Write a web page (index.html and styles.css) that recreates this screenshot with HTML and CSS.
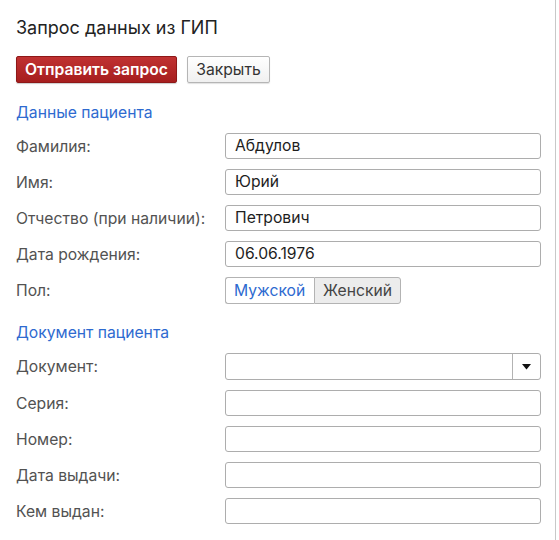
FILE: index.html
```html
<!DOCTYPE html>
<html lang="ru">
<head>
<meta charset="utf-8">
<title>Запрос данных из ГИП</title>
<link rel="stylesheet" href="styles.css">
</head>
<body>
<div class="panel">
  <h1 class="title">Запрос данных из ГИП</h1>
  <div class="actions">
    <button class="btn btn-primary" type="button">Отправить запрос</button>
    <button class="btn btn-default" type="button">Закрыть</button>
  </div>

  <h2 class="section">Данные пациента</h2>
  <div class="form">
    <label class="label">Фамилия:</label>
    <div class="field">Абдулов</div>
    <label class="label">Имя:</label>
    <div class="field">Юрий</div>
    <label class="label">Отчество (при наличии):</label>
    <div class="field">Петрович</div>
    <label class="label">Дата рождения:</label>
    <div class="field">06.06.1976</div>
    <label class="label">Пол:</label>
    <div class="toggle">
      <span class="toggle-item active">Мужской</span>
      <span class="toggle-item">Женский</span>
    </div>
  </div>

  <h2 class="section section-2">Документ пациента</h2>
  <div class="form">
    <label class="label">Документ:</label>
    <div class="field select">
      <span class="select-value"></span>
      <span class="select-btn"><svg width="9" height="6" viewBox="0 0 9 6"><path d="M0 0H9L4.5 5.5Z" fill="#111"/></svg></span>
    </div>
    <label class="label">Серия:</label>
    <div class="field"></div>
    <label class="label">Номер:</label>
    <div class="field"></div>
    <label class="label">Дата выдачи:</label>
    <div class="field"></div>
    <label class="label">Кем выдан:</label>
    <div class="field"></div>
  </div>
</div>
</body>
</html>
```

FILE: styles.css
```css
html, body {
  margin: 0;
  padding: 0;
  background: #fff;
}
body {
  font-family: Inter, "Liberation Sans", Arial, sans-serif;
  color: #333;
}
.panel {
  width: 556px;
  min-height: 540px;
  box-sizing: border-box;
  border-right: 1px solid #c8c8c8;
  padding: 17px 15px 0 16px;
}
.title {
  margin: 0;
  font-size: 18px;
  line-height: 22px;
  font-weight: normal;
  color: #222;
}
.actions {
  display: flex;
  gap: 10px;
  margin-top: 17px;
}
.btn {
  font-family: inherit;
  font-size: 15.7px;
  height: 27px;
  box-sizing: border-box;
  border-radius: 2px;
  padding: 0;
  margin: 0;
  line-height: 25px;
}
.btn-primary {
  width: 161px;
  color: #fff;
  font-weight: 600;
  background: linear-gradient(#c03232, #a61e1e);
  border: 1px solid #8e1818;
  box-shadow: 0 1px 1px rgba(0,0,0,0.2);
}
.btn-default {
  width: 83px;
  color: #333;
  background: linear-gradient(#fff, #f0f0f0);
  border: 1px solid #b5b5b5;
  box-shadow: 0 1px 1px rgba(0,0,0,0.12);
}
.section {
  margin: 20px 0 0;
  font-size: 15.7px;
  line-height: 20px;
  font-weight: normal;
  color: #2e6ad0;
}
.section-2 {
  margin-top: 19px;
}
.form {
  display: grid;
  grid-template-columns: 209px 316px;
  row-gap: 10px;
  margin-top: 10px;
  align-items: center;
}
.label {
  font-size: 15.7px;
  color: #525252;
}
.field {
  height: 26px;
  box-sizing: border-box;
  border: 1px solid #adadad;
  border-radius: 3px;
  padding: 0 9px;
  font-size: 15.7px;
  line-height: 24px;
  color: #1e1e1e;
  background: #fff;
}
.select {
  display: flex;
  padding: 0;
  height: 27px;
}
.select-value {
  flex: 1;
}
.select-btn {
  width: 27px;
  border-left: 1px solid #b3b3b3;
  display: flex;
  align-items: center;
  justify-content: center;
}
.toggle {
  display: flex;
  height: 27px;
}
.toggle-item {
  box-sizing: border-box;
  height: 27px;
  border: 1px solid #b3b3b3;
  font-size: 15.7px;
  line-height: 25px;
  padding: 0 0 0 8px;
  color: #444;
  background: #ececec;
}
.toggle-item.active {
  width: 89px;
  color: #2e6ad0;
  background: #fff;
  border-radius: 3px 0 0 3px;
  border-right: none;
}
.toggle-item:last-child {
  width: 87px;
  border-radius: 0 3px 3px 0;
}
```
